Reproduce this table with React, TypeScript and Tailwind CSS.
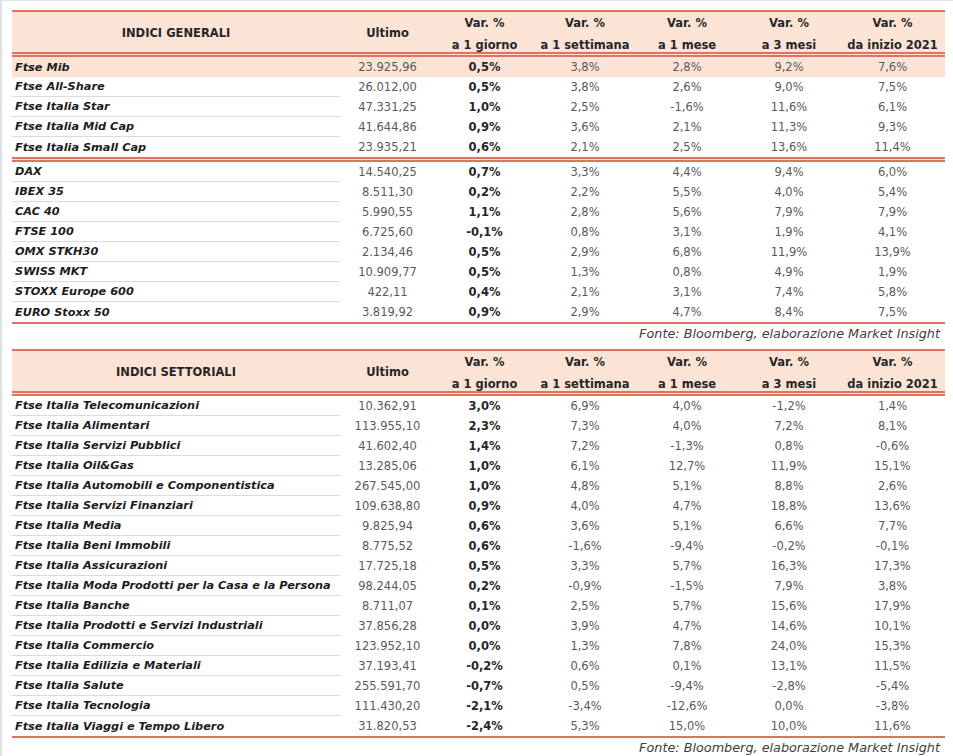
import React from "react";

type Row = [string, string, string, string, string, string, string];

const generali: Row[][] = [
  [
    ["Ftse Mib", "23.925,96", "0,5%", "3,8%", "2,8%", "9,2%", "7,6%"],
    ["Ftse All-Share", "26.012,00", "0,5%", "3,8%", "2,6%", "9,0%", "7,5%"],
    ["Ftse Italia Star", "47.331,25", "1,0%", "2,5%", "-1,6%", "11,6%", "6,1%"],
    ["Ftse Italia Mid Cap", "41.644,86", "0,9%", "3,6%", "2,1%", "11,3%", "9,3%"],
    ["Ftse Italia Small Cap", "23.935,21", "0,6%", "2,1%", "2,5%", "13,6%", "11,4%"],
  ],
  [
    ["DAX", "14.540,25", "0,7%", "3,3%", "4,4%", "9,4%", "6,0%"],
    ["IBEX 35", "8.511,30", "0,2%", "2,2%", "5,5%", "4,0%", "5,4%"],
    ["CAC 40", "5.990,55", "1,1%", "2,8%", "5,6%", "7,9%", "7,9%"],
    ["FTSE 100", "6.725,60", "-0,1%", "0,8%", "3,1%", "1,9%", "4,1%"],
    ["OMX STKH30", "2.134,46", "0,5%", "2,9%", "6,8%", "11,9%", "13,9%"],
    ["SWISS MKT", "10.909,77", "0,5%", "1,3%", "0,8%", "4,9%", "1,9%"],
    ["STOXX Europe 600", "422,11", "0,4%", "2,1%", "3,1%", "7,4%", "5,8%"],
    ["EURO Stoxx 50", "3.819,92", "0,9%", "2,9%", "4,7%", "8,4%", "7,5%"],
  ],
];

const settoriali: Row[][] = [
  [
    ["Ftse Italia Telecomunicazioni", "10.362,91", "3,0%", "6,9%", "4,0%", "-1,2%", "1,4%"],
    ["Ftse Italia Alimentari", "113.955,10", "2,3%", "7,3%", "4,0%", "7,2%", "8,1%"],
    ["Ftse Italia Servizi Pubblici", "41.602,40", "1,4%", "7,2%", "-1,3%", "0,8%", "-0,6%"],
    ["Ftse Italia Oil&Gas", "13.285,06", "1,0%", "6,1%", "12,7%", "11,9%", "15,1%"],
    ["Ftse Italia Automobili e Componentistica", "267.545,00", "1,0%", "4,8%", "5,1%", "8,8%", "2,6%"],
    ["Ftse Italia Servizi Finanziari", "109.638,80", "0,9%", "4,0%", "4,7%", "18,8%", "13,6%"],
    ["Ftse Italia Media", "9.825,94", "0,6%", "3,6%", "5,1%", "6,6%", "7,7%"],
    ["Ftse Italia Beni Immobili", "8.775,52", "0,6%", "-1,6%", "-9,4%", "-0,2%", "-0,1%"],
    ["Ftse Italia Assicurazioni", "17.725,18", "0,5%", "3,3%", "5,7%", "16,3%", "17,3%"],
    ["Ftse Italia Moda Prodotti per la Casa e la Persona", "98.244,05", "0,2%", "-0,9%", "-1,5%", "7,9%", "3,8%"],
    ["Ftse Italia Banche", "8.711,07", "0,1%", "2,5%", "5,7%", "15,6%", "17,9%"],
    ["Ftse Italia Prodotti e Servizi Industriali", "37.856,28", "0,0%", "3,9%", "4,7%", "14,6%", "10,1%"],
    ["Ftse Italia Commercio", "123.952,10", "0,0%", "1,3%", "7,8%", "24,0%", "15,3%"],
    ["Ftse Italia Edilizia e Materiali", "37.193,41", "-0,2%", "0,6%", "0,1%", "13,1%", "11,5%"],
    ["Ftse Italia Salute", "255.591,70", "-0,7%", "0,5%", "-9,4%", "-2,8%", "-5,4%"],
    ["Ftse Italia Tecnologia", "111.430,20", "-2,1%", "-3,4%", "-12,6%", "0,0%", "-3,8%"],
    ["Ftse Italia Viaggi e Tempo Libero", "31.820,53", "-2,4%", "5,3%", "15,0%", "10,0%", "11,6%"],
  ],
];

const cols = "grid grid-cols-[328px_95px_99px_102px_102px_102px_105px]";

function Header({ title }: { title: string }) {
  const vars = ["a 1 giorno", "a 1 settimana", "a 1 mese", "a 3 mesi", "da inizio 2021"];
  return (
    <div className={`${cols} h-[40px] bg-[#fbe4d6] font-bold text-[11.5px] text-[#262626]`}>
      <div className="flex items-center justify-center">{title}</div>
      <div className="flex items-center justify-center">Ultimo</div>
      {vars.map((v) => (
        <div key={v} className="flex flex-col items-center justify-center leading-[22px]">
          <span>Var. %</span>
          <span>{v}</span>
        </div>
      ))}
    </div>
  );
}

function Table({ title, groups, highlightFirst }: { title: string; groups: Row[][]; highlightFirst?: boolean }) {
  return (
    <div className="w-[933px]">
      <div className="h-[2px] bg-[#e07262]" />
      <Header title={title} />
      {groups.map((g, gi) => (
        <div key={gi}>
          <div className="h-[5px] border-t-[2px] border-b-[2px] border-[#e07262] bg-[#fbe4d6]" />
          {g.map((r, ri) => {
            const hl = highlightFirst && gi === 0 && ri === 0;
            const last = ri === g.length - 1;
            return (
              <div key={ri} className={`${cols} h-[20px] pt-[2px] text-[11.5px] ${hl ? "bg-[#fbe4d6]" : ""}`}>
                <div
                  className={`flex items-center pl-[3px] text-[11.3px] font-bold italic text-[#1c1c1c] ${
                    last || hl ? "" : "border-b border-[#dcdcdc]"
                  }`}
                >
                  {r[0]}
                </div>
                <div className="flex items-center justify-center text-[#5a5a5a]">{r[1]}</div>
                <div className="flex items-center justify-center font-bold text-[#262626]">{r[2]}</div>
                {r.slice(3).map((v, i) => (
                  <div key={i} className="flex items-center justify-center text-[#5a5a5a]">
                    {v}
                  </div>
                ))}
              </div>
            );
          })}
        </div>
      ))}
      <div className="h-[2px] bg-[#e07262]" />
      <div className="h-[20px] flex items-center justify-end pr-[5px] italic text-[12.8px] text-[#404040]">
        Fonte: Bloomberg, elaborazione Market Insight
      </div>
    </div>
  );
}

export default function App() {
  return (
    <div
      className="w-[953px] h-[756px] bg-white border-t border-l-2 border-[#dde3e0] pl-[10px] pt-[9px] overflow-hidden"
      style={{ fontFamily: "'DejaVu Sans', 'Liberation Sans', sans-serif" }}
    >
      <Table title="INDICI GENERALI" groups={generali} highlightFirst />
      <div className="h-[5px]" />
      <Table title="INDICI SETTORIALI" groups={settoriali} />
    </div>
  );
}
